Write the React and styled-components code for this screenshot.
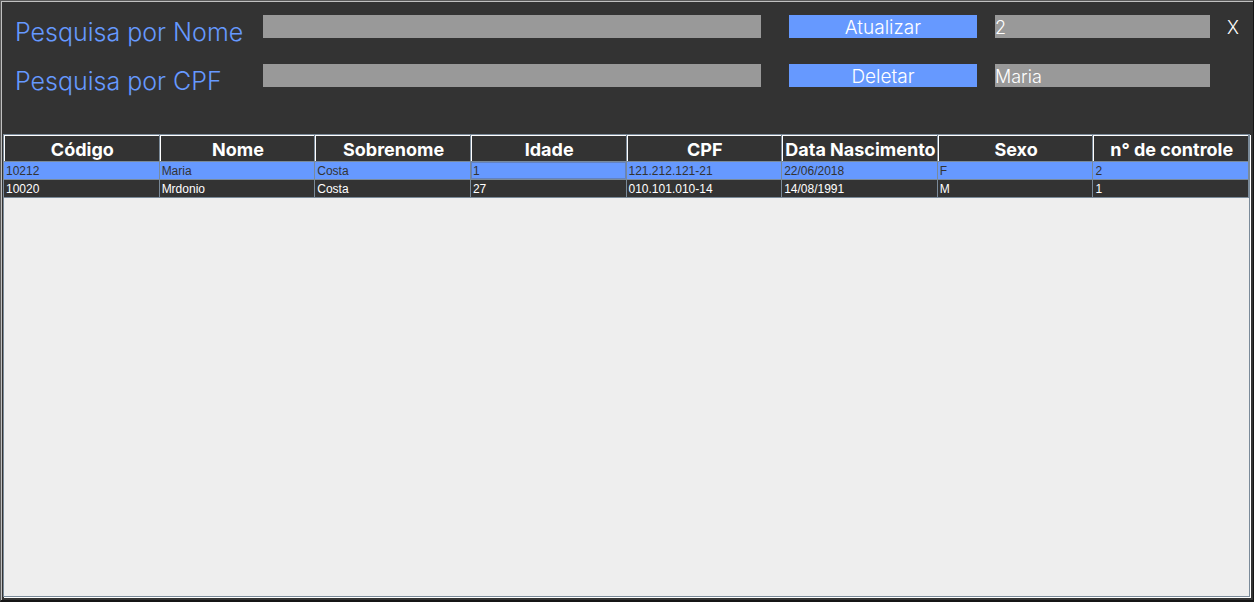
import React, { useState } from "react";
import styled, { createGlobalStyle } from "styled-components";

const GlobalStyle = createGlobalStyle`
  * { box-sizing: border-box; }
  html, body, #root { height: 100%; }
  body { margin: 0; background: #333333; }
`;

const display = `"Century Gothic", Inter, "Open Sans", sans-serif`;

const Window = styled.main`
  display: flex;
  flex-direction: column;
  height: 100%;
  padding: 0 1px 3px;
  background: #333333;
  border: solid;
  border-width: 1px 1px 2px 1px;
  border-color: #5a5a5a #151515 #151515 #5a5a5a;
  box-shadow: inset 1px 1px 0 #c0c0c0;
  font-family: ${display};
  overflow: hidden;
`;

const SearchPanel = styled.form`
  display: grid;
  grid-template-columns: 230px minmax(100px, 516fr) minmax(120px, 216fr) minmax(100px, 233fr) 29px;
  grid-auto-rows: 35px;
  row-gap: 14px;
  align-items: start;
  padding: 14px 13px 35px;
`;

const Label = styled.label`
  color: #6699ff;
  font-size: 25px;
  font-weight: 300;
  line-height: 35px;
  white-space: nowrap;
`;

const Field = styled.input`
  height: 23px;
  margin-left: 18px;
  padding: 1px 0 0;
  min-width: 0;
  border: 0;
  border-radius: 0;
  outline: 0;
  background: #999999;
  color: #ffffff;
  font: 300 18px/22px ${display};
`;

const Action = styled.button`
  height: 23px;
  margin-left: 28px;
  padding: 2px 0 0;
  border: 0;
  background: #6699ff;
  color: #ffffff;
  font: 300 19px/21px ${display};
`;

const Close = styled.button`
  height: 25px;
  padding: 0;
  border: 0;
  background: transparent;
  color: #ffffff;
  text-align: right;
  font: 300 18px/25px ${display};
`;

const TablePane = styled.section`
  flex: 1;
  min-height: 0;
  margin: 0 2px 0 1px;
  background: #eeeeee;
  border: 1px solid #7a8a99;
  box-shadow: 1px 1px 0 #ffffff;
  overflow: hidden;
`;

const Table = styled.table`
  width: 100%;
  table-layout: fixed;
  border-collapse: separate;
  border-spacing: 0;
`;

const Heading = styled.th`
  height: 27px;
  padding: 4px 0 0 2px;
  border: solid #7a8a99;
  border-width: 0 1px 1px 0;
  background: #333333;
  box-shadow: inset 1px 1px 0 #ffffff;
  color: #ffffff;
  font: 700 18px/22px ${display};
  text-align: center;
  white-space: nowrap;
`;

const Row = styled.tr`
  background: ${(p) => (p.$selected ? "#6699ff" : "#333333")};
  color: ${(p) => (p.$selected ? "#333333" : "#ffffff")};
`;

const Cell = styled.td`
  height: 18px;
  padding: 1px 0 0 2px;
  border: solid #7a8a99;
  border-width: 0 1px 1px 0;
  box-shadow: ${(p) => (p.$focused ? "inset 0 0 0 1px #6382bf" : "none")};
  font: 12px/16px "Liberation Sans", Arial, sans-serif;
`;

const columns = ["Código", "Nome", "Sobrenome", "Idade", "CPF", "Data Nascimento", "Sexo", "n° de controle"];
const people = [
  ["10212", "Maria", "Costa", "1", "121.212.121-21", "22/06/2018", "F", "2"],
  ["10020", "Mrdonio", "Costa", "27", "010.101.010-14", "14/08/1991", "M", "1"],
];

export default function App() {
  const [active, setActive] = useState({ row: 0, column: 3 });

  return (
    <Window>
      <GlobalStyle />
      <SearchPanel onSubmit={(e) => e.preventDefault()}>
        <Label htmlFor="search-name">Pesquisa por Nome</Label>
        <Field id="search-name" />
        <Action type="button">Atualizar</Action>
        <Field aria-label="n° de controle" defaultValue="2" />
        <Close type="button" aria-label="Fechar">X</Close>
        <Label htmlFor="search-cpf">Pesquisa por CPF</Label>
        <Field id="search-cpf" />
        <Action type="button">Deletar</Action>
        <Field aria-label="Nome" defaultValue="Maria" />
      </SearchPanel>
      <TablePane>
        <Table>
          <thead>
            <tr>{columns.map((c) => <Heading key={c} scope="col">{c}</Heading>)}</tr>
          </thead>
          <tbody>
            {people.map((person, row) => (
              <Row key={person[0]} $selected={row === active.row}>
                {person.map((value, column) => (
                  <Cell
                    key={columns[column]}
                    $focused={row === active.row && column === active.column}
                    onClick={() => setActive({ row, column })}
                  >
                    {value}
                  </Cell>
                ))}
              </Row>
            ))}
          </tbody>
        </Table>
      </TablePane>
    </Window>
  );
}
